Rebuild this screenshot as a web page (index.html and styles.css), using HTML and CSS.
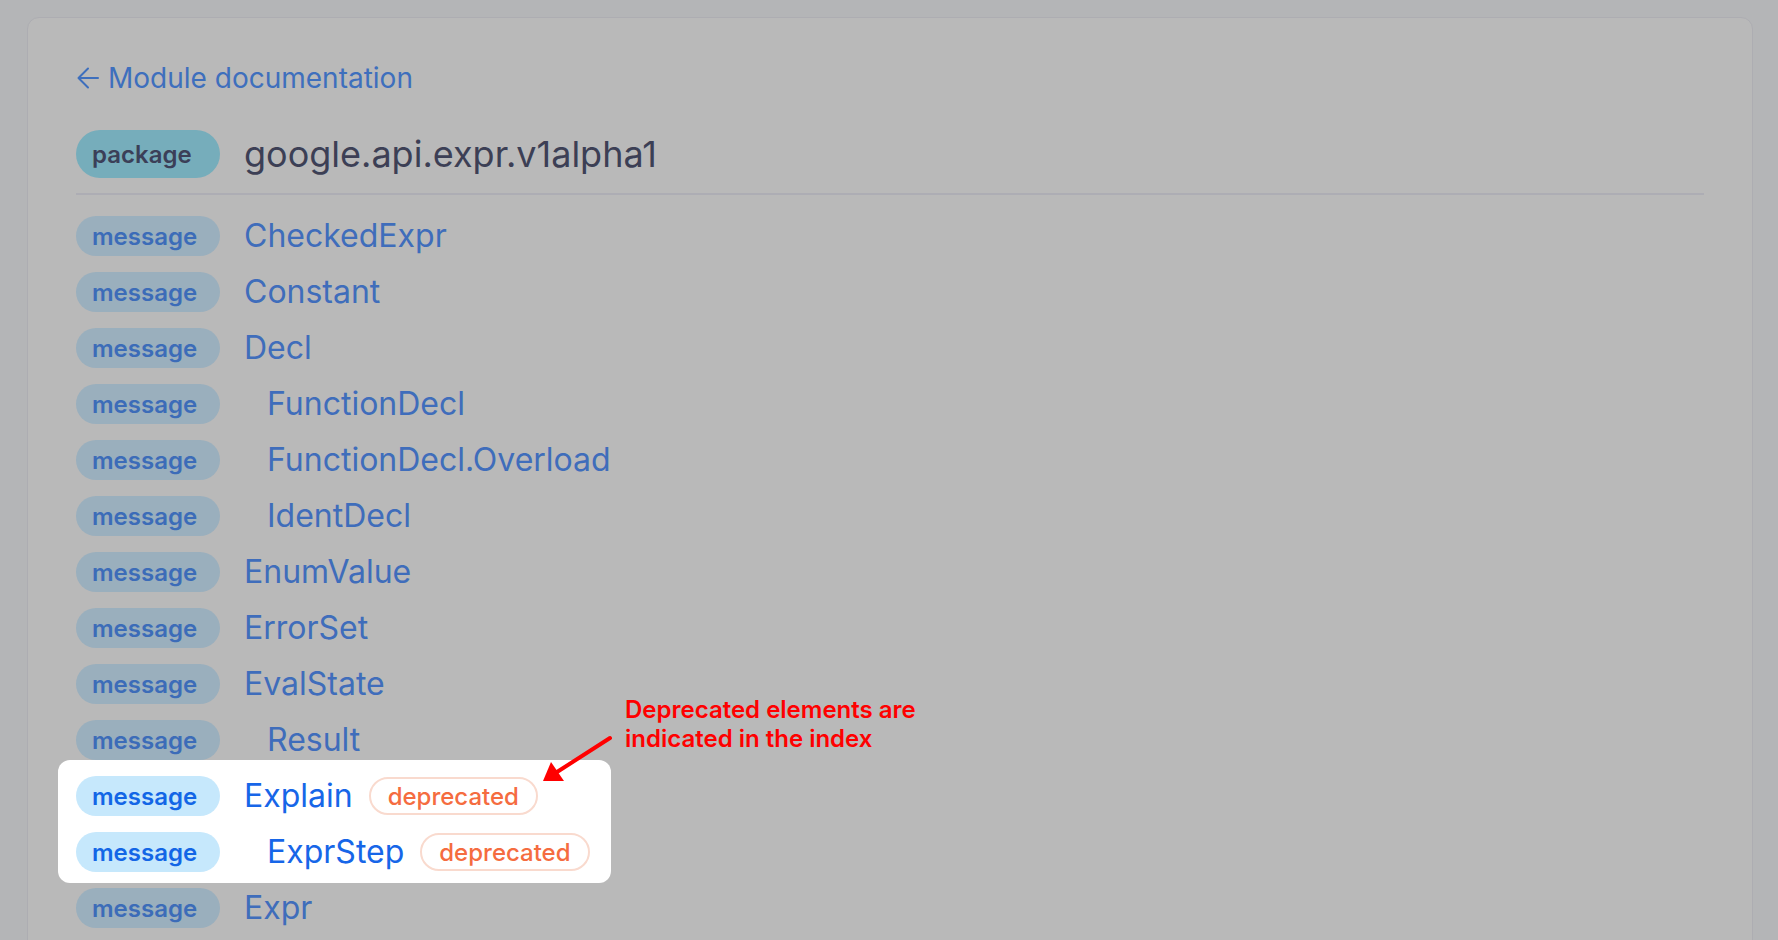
FILE: index.html
```html
<!DOCTYPE html>
<html lang="en">
<head>
<meta charset="utf-8">
<title>google.api.expr.v1alpha1</title>
<link rel="stylesheet" href="styles.css">
</head>
<body>
<div class="card">
  <a class="back-link" href="#">
    <svg class="back-icon" width="22" height="22" viewBox="0 0 22 22" fill="none" stroke="currentColor" stroke-width="2" stroke-linecap="round" stroke-linejoin="round"><path d="M21 11H2"/><path d="M11 1.5L1.5 11L11 20.5"/></svg>
    <span>Module documentation</span>
  </a>
  <div class="package-row">
    <span class="pill pill-package">package</span>
    <h1 class="package-name">google.api.expr.v1alpha1</h1>
  </div>
  <div class="index">
    <div class="row"><span class="pill pill-msg">message</span><a class="name" href="#">CheckedExpr</a></div>
    <div class="row"><span class="pill pill-msg">message</span><a class="name" href="#">Constant</a></div>
    <div class="row"><span class="pill pill-msg">message</span><a class="name" href="#">Decl</a></div>
    <div class="row"><span class="pill pill-msg">message</span><a class="name nested" href="#">FunctionDecl</a></div>
    <div class="row"><span class="pill pill-msg">message</span><a class="name nested" href="#">FunctionDecl.Overload</a></div>
    <div class="row"><span class="pill pill-msg">message</span><a class="name nested" href="#">IdentDecl</a></div>
    <div class="row"><span class="pill pill-msg">message</span><a class="name" href="#">EnumValue</a></div>
    <div class="row"><span class="pill pill-msg">message</span><a class="name" href="#">ErrorSet</a></div>
    <div class="row"><span class="pill pill-msg">message</span><a class="name" href="#">EvalState</a></div>
    <div class="row"><span class="pill pill-msg">message</span><a class="name nested" href="#">Result</a></div>
    <div class="highlight">
      <div class="row"><span class="pill pill-msg-hl">message</span><a class="name name-hl" href="#">Explain</a><span class="deprecated">deprecated</span></div>
      <div class="row"><span class="pill pill-msg-hl">message</span><a class="name name-hl nested" href="#">ExprStep</a><span class="deprecated">deprecated</span></div>
    </div>
    <div class="row"><span class="pill pill-msg">message</span><a class="name" href="#">Expr</a></div>
  </div>

  <div class="annotation">Deprecated elements are<br>indicated in the index</div>
  <svg class="annotation-arrow" width="80" height="56" viewBox="0 0 80 56"><line x1="70" y1="8" x2="17" y2="42" stroke="#ff0000" stroke-width="4" stroke-linecap="round"/><polygon points="3,51 11,32 24,51" fill="#ff0000"/></svg>
</div>
</body>
</html>
```

FILE: styles.css
```css
html, body {
  margin: 0;
  padding: 0;
}

body {
  background: #b4b5b7;
  font-family: Inter, "Noto Sans", "Liberation Sans", sans-serif;
  overflow: hidden;
  height: 940px;
}

.card {
  position: relative;
  margin: 17px 25px 0 27px;
  background: #b9b9b9;
  border: 1px solid #adadb2;
  border-radius: 12px;
  padding: 43px 48px 40px 48px;
}

.back-link {
  display: inline-flex;
  align-items: center;
  gap: 9px;
  color: #3e6fbd;
  text-decoration: none;
  font-size: 28px;
  line-height: 34px;
}

.back-icon {
  margin-left: 1px;
  flex: none;
}

.package-row {
  display: flex;
  align-items: center;
  gap: 24px;
  margin-top: 35px;
  padding-bottom: 15px;
  border-bottom: 2px solid #adadb4;
}

.pill {
  box-sizing: border-box;
  display: flex;
  align-items: center;
  flex: none;
  width: 144px;
  padding-left: 16px;
  font-size: 24px;
  font-weight: 600;
}

.pill-package {
  height: 48px;
  border-radius: 24px;
  background: #76adbb;
  color: #3b3f58;
}

.package-name {
  margin: 0;
  font-size: 36px;
  font-weight: 400;
  color: #3c3f55;
  line-height: 44px;
}

.index {
  display: flex;
  flex-direction: column;
  gap: 16px;
  margin-top: 21px;
}

.row {
  display: flex;
  align-items: center;
  height: 40px;
}

.pill-msg {
  height: 40px;
  border-radius: 20px;
  background: #9aafbd;
  color: #3c6cb8;
}

.pill-msg-hl {
  height: 40px;
  border-radius: 20px;
  background: #c6e8fc;
  color: #1366e6;
}

.name {
  margin-left: 24px;
  font-size: 32px;
  line-height: 40px;
  color: #3f6dbb;
  text-decoration: none;
  white-space: nowrap;
}

.name.nested {
  margin-left: 47px;
}

.name-hl {
  color: #1766e8;
}

.highlight {
  display: flex;
  flex-direction: column;
  gap: 16px;
  width: fit-content;
  background: #ffffff;
  border-radius: 12px;
  margin: -16px 0 -11px -18px;
  padding: 16px 21px 11px 18px;
}

.deprecated {
  box-sizing: border-box;
  display: flex;
  align-items: center;
  height: 38px;
  margin-left: 16px;
  padding: 0 17px;
  border: 2px solid #f9dace;
  border-radius: 19px;
  color: #f56c40;
  font-size: 24px;
  font-weight: 500;
}

.annotation {
  position: absolute;
  left: 597px;
  top: 677px;
  color: #ff0000;
  font-size: 24px;
  font-weight: 600;
  line-height: 29px;
}

.annotation-arrow {
  position: absolute;
  left: 512px;
  top: 712px;
}
```
